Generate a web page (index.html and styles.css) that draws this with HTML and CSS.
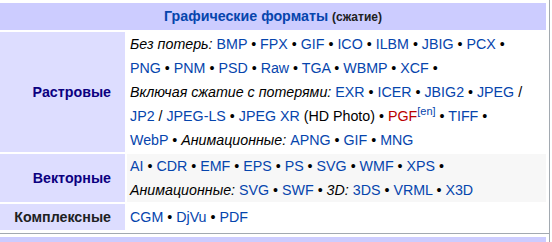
FILE: index.html
```
<!DOCTYPE html>
<html>
	<head>
		<meta charset="UTF-8">
		<title>Графические форматы</title>
		<link rel="stylesheet" href="styles.css">
	</head>
	<body>
		<div class="navbox">
			<table class="navbox-inner">
				<tr>
					<th colspan="2" class="navbox-title"><a href="#">Графические форматы</a> <small>(сжатие)</small></th>
				</tr>
				<tr>
					<th class="navbox-group"><a href="#" class="visited">Растровые</a></th>
					<td class="navbox-list">
						<i>Без потерь:</i> <a href="#">BMP</a> • <a href="#">FPX</a> • <a href="#">GIF</a> • <a href="#">ICO</a> • <a href="#">ILBM</a> • <a href="#">JBIG</a> • <a href="#">PCX</a> •<br>
						<a href="#">PNG</a> • <a href="#">PNM</a> • <a href="#">PSD</a> • <a href="#">Raw</a> • <a href="#">TGA</a> • <a href="#">WBMP</a> • <a href="#">XCF</a> •<br>
						<i>Включая сжатие с потерями:</i> <a href="#">EXR</a> • <a href="#">ICER</a> • <a href="#">JBIG2</a> • <a href="#">JPEG</a> /<br>
						<a href="#">JP2</a> / <a href="#">JPEG-LS</a> • <a href="#">JPEG XR</a> (HD Photo) • <a href="#" class="new">PGF</a><sup><a href="#">[en]</a></sup> • <a href="#">TIFF</a> •<br>
						<a href="#">WebP</a> • <i>Анимационные:</i> <a href="#">APNG</a> • <a href="#">GIF</a> • <a href="#">MNG</a>
					</td>
				</tr>
				<tr>
					<th class="navbox-group"><a href="#" class="visited">Векторные</a></th>
					<td class="navbox-list even">
						<a href="#">AI</a> • <a href="#">CDR</a> • <a href="#">EMF</a> • <a href="#">EPS</a> • <a href="#">PS</a> • <a href="#">SVG</a> • <a href="#">WMF</a> • <a href="#">XPS</a> •<br>
						<i>Анимационные:</i> <a href="#">SVG</a> • <a href="#">SWF</a> • <i>3D:</i> <a href="#">3DS</a> • <a href="#">VRML</a> • <a href="#">X3D</a>
					</td>
				</tr>
				<tr class="last">
					<th class="navbox-group">Комплексные</th>
					<td class="navbox-list">
						<a href="#">CGM</a> • <a href="#">DjVu</a> • <a href="#">PDF</a>
					</td>
				</tr>
			</table>
		</div>
		<!-- следующий шаблон, виден только заголовок -->
		<div class="navbox navbox-next">
			<table class="navbox-inner">
				<tr>
					<th class="navbox-title">&nbsp;</th>
				</tr>
			</table>
		</div>
	</body>
</html>
```

FILE: styles.css
```
html,body{
	height: 242px;
	overflow: hidden;
}
body{
	margin: 0;
	font-family: "Liberation Sans", Arial, sans-serif;
	font-size: 14.25px;
	color: #000;
	background: #fff;
}
a{
	color: #0645ad;
	text-decoration: none;
}
a.visited{
	color: #0b0080;
}
a.new{
	color: #ba0000;
}
.navbox{
	width: 554px;
	box-sizing: border-box;
	margin: -1px 0 0 -4px;
	border: 1px solid #a2a9b1;
	padding: 1px;
}
.navbox-inner{
	width: 100%;
	border-spacing: 2px;
}
.navbox-inner th,
.navbox-inner td{
	padding: 0;
	line-height: 24px;
}
.navbox-title{
	background: #ccf;
	text-align: center;
	padding: 1px 0 !important;
	font-weight: bold;
}
.navbox-title small{
	font-size: 12px;
	color: #202122;
}
.navbox-group{
	width: 97px;
	background: #ddf;
	text-align: right;
	padding: 0 14px !important;
	white-space: nowrap;
	color: #202122;
}
.navbox-list{
	text-align: left;
	padding: 0 3px !important;
	white-space: nowrap;
	vertical-align: top;
}
.navbox-list.even{
	background: #f7f7f7;
}
.last th,
.last td{
	padding-top: 1px !important;
	padding-bottom: 1px !important;
}
sup{
	font-size: 11px;
	line-height: 1;
	vertical-align: 6px;
}
.navbox-next{
	margin-top: 0;
	border-top: none;
}
```
